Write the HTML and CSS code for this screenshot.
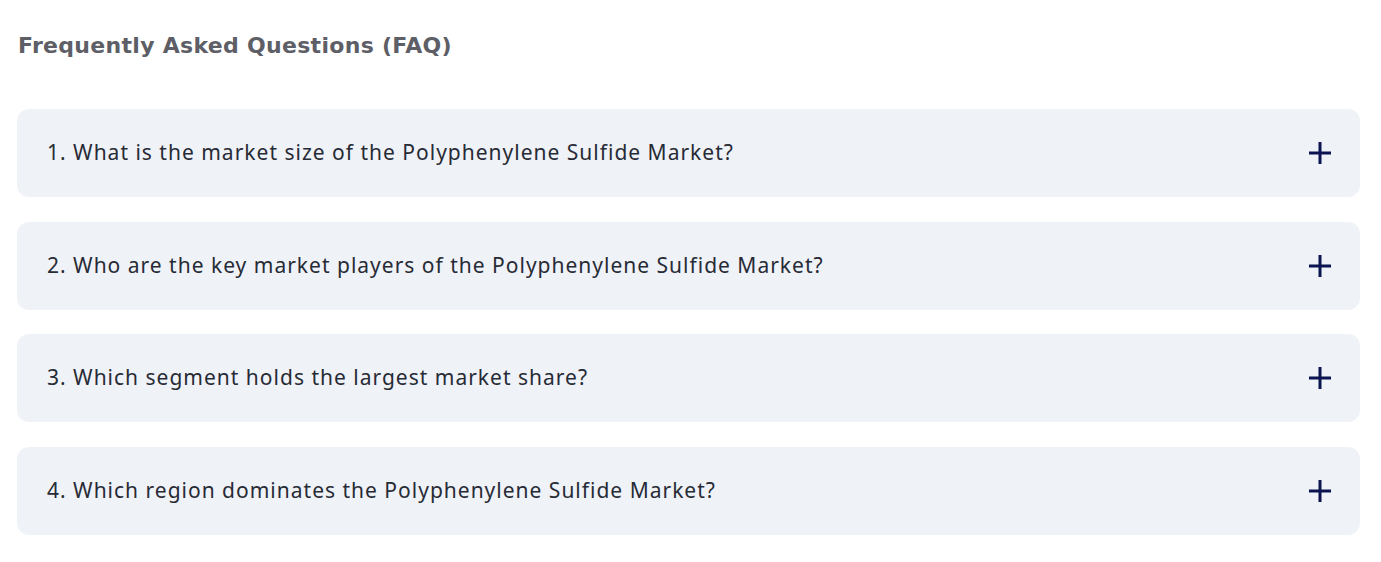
FILE: index.html
```html
<!DOCTYPE html>
<html lang="en">
<head>
<meta charset="utf-8">
<title>FAQ</title>
<link rel="stylesheet" href="styles.css">
</head>
<body>
<section class="faq">
  <h2 class="faq-title">Frequently Asked Questions (FAQ)</h2>
  <div class="faq-list">
    <div class="faq-item">
      <span class="faq-q">1. What is the market size of the Polyphenylene Sulfide Market?</span>
      <svg class="faq-icon" viewBox="0 0 22 22" width="22" height="22"><path d="M11 0v22M0 11h22" stroke="#0b1450" stroke-width="3" fill="none"/></svg>
    </div>
    <div class="faq-item">
      <span class="faq-q">2. Who are the key market players of the Polyphenylene Sulfide Market?</span>
      <svg class="faq-icon" viewBox="0 0 22 22" width="22" height="22"><path d="M11 0v22M0 11h22" stroke="#0b1450" stroke-width="3" fill="none"/></svg>
    </div>
    <div class="faq-item">
      <span class="faq-q">3. Which segment holds the largest market share?</span>
      <svg class="faq-icon" viewBox="0 0 22 22" width="22" height="22"><path d="M11 0v22M0 11h22" stroke="#0b1450" stroke-width="3" fill="none"/></svg>
    </div>
    <div class="faq-item">
      <span class="faq-q">4. Which region dominates the Polyphenylene Sulfide Market?</span>
      <svg class="faq-icon" viewBox="0 0 22 22" width="22" height="22"><path d="M11 0v22M0 11h22" stroke="#0b1450" stroke-width="3" fill="none"/></svg>
    </div>
  </div>
</section>
</body>
</html>
```

FILE: styles.css
```css
html, body {
  margin: 0;
  padding: 0;
  background: #ffffff;
}
.faq {
  padding: 29px 21px 0 17px;
}
.faq-title {
  margin: 0 0 0 1px;
  font-family: "DejaVu Sans", "Open Sans", sans-serif;
  font-weight: 700;
  font-size: 22px;
  letter-spacing: 0.3px;
  line-height: 34px;
  color: #5d5e66;
}
.faq-list {
  margin-top: 46px;
  display: flex;
  flex-direction: column;
  gap: 24.67px;
}
.faq-item {
  height: 88px;
  box-sizing: border-box;
  padding: 0 29px 0 30px;
  background: #eff2f7;
  border-radius: 12px;
  display: flex;
  align-items: center;
  justify-content: space-between;
}
.faq-q {
  font-family: "Noto Sans", sans-serif;
  font-size: 21px;
  letter-spacing: 1px;
  color: #272b35;
  position: relative;
  top: -1px;
}
.faq-icon {
  flex: none;
}
```
